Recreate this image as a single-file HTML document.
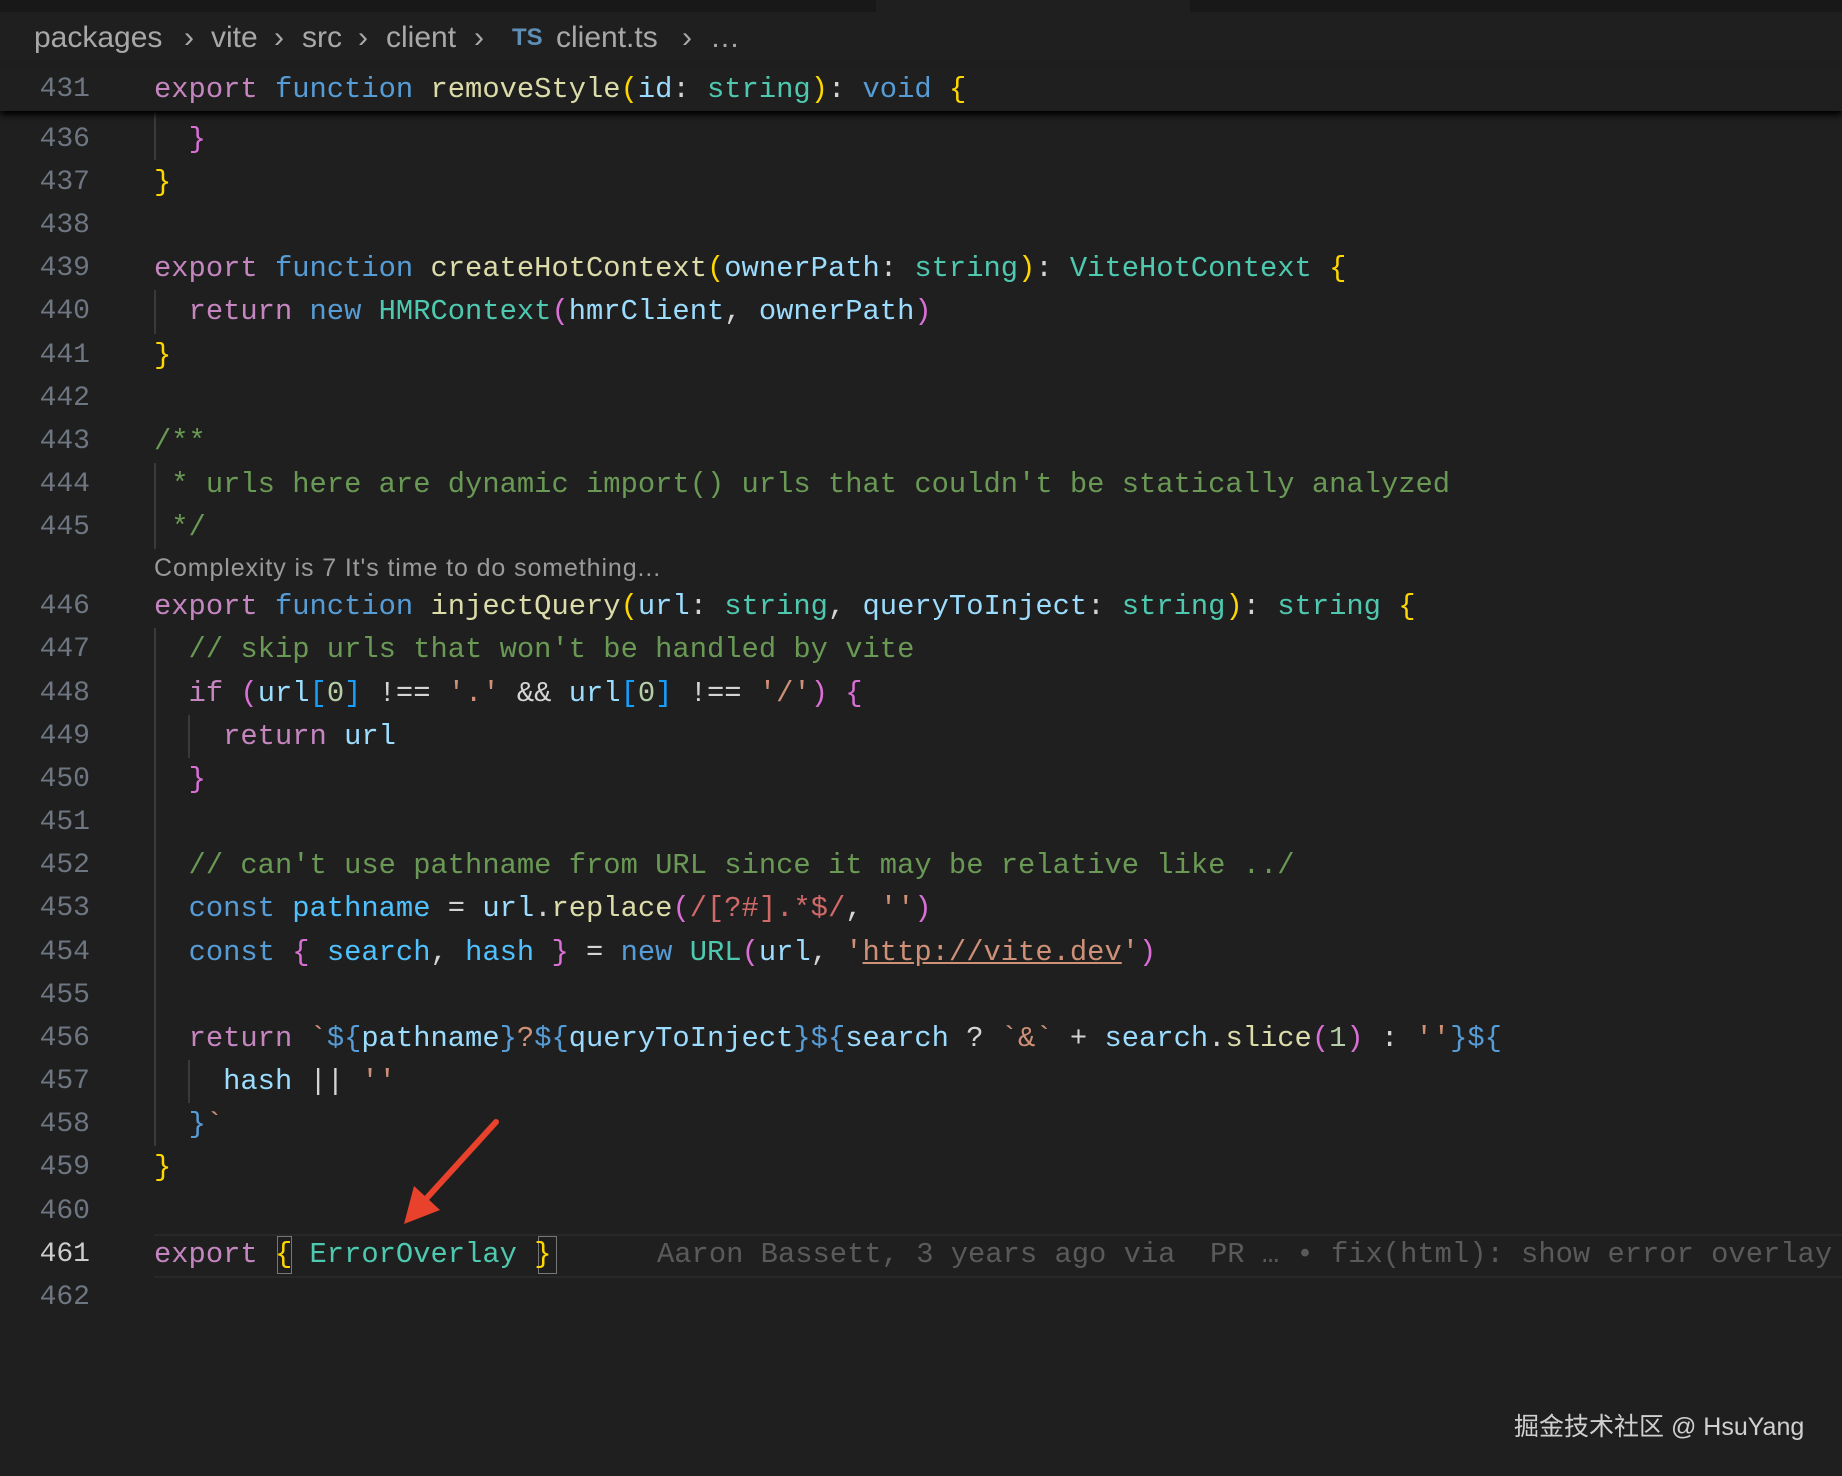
<!DOCTYPE html>
<html><head><meta charset="utf-8"><style>
html,body{margin:0;padding:0;}
body{width:1842px;height:1476px;background:#1f1f1f;position:relative;overflow:hidden;font-family:"Liberation Mono",monospace;}
.ln{position:absolute;left:0;width:90px;text-align:right;font-size:28px;line-height:43px;color:#6e7681;}
.cd{position:absolute;left:154px;font-size:28.8px;line-height:43px;white-space:pre;color:#d4d4d4;}
.g{position:absolute;width:2px;background:#3a3a3a;}
.bc{position:absolute;top:20px;font-family:'Liberation Sans',sans-serif;font-size:30px;color:#a8a8a8;white-space:pre;line-height:36px}
.k{color:#c586c0}.b{color:#569cd6}.f{color:#dcdcaa}.p{color:#9cdcfe}.t{color:#4ec9b0}.y{color:#ffd700}.m{color:#da70d6}.l{color:#179fff}.c{color:#6a9955}.s{color:#ce9178}.n{color:#b5cea8}.v{color:#4fc1ff}.r{color:#d16969}
</style></head><body>
<div style="position:absolute;left:0;top:0;width:876px;height:12px;background:#181818"></div>
<div style="position:absolute;left:1190px;top:0;width:652px;height:12px;background:#181818"></div>
<div class="bc" style="left:34px">packages</div>
<div class="bc" style="left:184px">›</div>
<div class="bc" style="left:211px">vite</div>
<div class="bc" style="left:274px">›</div>
<div class="bc" style="left:302px">src</div>
<div class="bc" style="left:358px">›</div>
<div class="bc" style="left:386px">client</div>
<div class="bc" style="left:474px">›</div>
<div class="bc" style="left:512px;color:#5f8fb5;font-weight:bold;font-size:24px">TS</div>
<div class="bc" style="left:556px">client.ts</div>
<div class="bc" style="left:682px">›</div>
<div class="bc" style="left:710px">…</div>

<div style="position:absolute;left:0;top:66px;width:1842px;height:45px;background:#1f1f1f;box-shadow:0 4px 6px #000;z-index:2">
<div class="ln" style="top:2px">431</div>
<div class="cd" style="top:2px"><span class="k">export</span> <span class="b">function</span> <span class="f">removeStyle</span><span class="y">(</span><span class="p">id</span>: <span class="t">string</span><span class="y">)</span>: <span class="b">void</span> <span class="y">{</span></div>
</div>

<div class="g" style="left:154px;top:112px;height:48px"></div>
<div class="g" style="left:154px;top:290px;height:44px"></div>
<div class="g" style="left:154px;top:463px;height:86px"></div>
<div class="g" style="left:154px;top:628px;height:518px"></div>
<div class="g" style="left:188px;top:715px;height:43px"></div>
<div class="g" style="left:188px;top:1060px;height:43px"></div>

<div class="ln" style="top:118px">436</div><div class="cd" style="top:118px">  <span class="m">}</span></div>
<div class="ln" style="top:161px">437</div><div class="cd" style="top:161px"><span class="y">}</span></div>
<div class="ln" style="top:204px">438</div>
<div class="ln" style="top:247px">439</div><div class="cd" style="top:247px"><span class="k">export</span> <span class="b">function</span> <span class="f">createHotContext</span><span class="y">(</span><span class="p">ownerPath</span>: <span class="t">string</span><span class="y">)</span>: <span class="t">ViteHotContext</span> <span class="y">{</span></div>
<div class="ln" style="top:290px">440</div><div class="cd" style="top:290px">  <span class="k">return</span> <span class="b">new</span> <span class="t">HMRContext</span><span class="m">(</span><span class="p">hmrClient</span>, <span class="p">ownerPath</span><span class="m">)</span></div>
<div class="ln" style="top:334px">441</div><div class="cd" style="top:334px"><span class="y">}</span></div>
<div class="ln" style="top:377px">442</div>
<div class="ln" style="top:420px">443</div><div class="cd c" style="top:420px">/**</div>
<div class="ln" style="top:463px">444</div><div class="cd c" style="top:463px"> * urls here are dynamic import() urls that couldn't be statically analyzed</div>
<div class="ln" style="top:506px">445</div><div class="cd c" style="top:506px"> */</div>
<div style="position:absolute;left:154px;top:554px;font-family:'Liberation Sans',sans-serif;font-size:25px;letter-spacing:0.9px;color:#9a9a9a">Complexity is 7 It's time to do something...</div>
<div class="ln" style="top:585px">446</div><div class="cd" style="top:585px"><span class="k">export</span> <span class="b">function</span> <span class="f">injectQuery</span><span class="y">(</span><span class="p">url</span>: <span class="t">string</span>, <span class="p">queryToInject</span>: <span class="t">string</span><span class="y">)</span>: <span class="t">string</span> <span class="y">{</span></div>
<div class="ln" style="top:628px">447</div><div class="cd c" style="top:628px">  // skip urls that won't be handled by vite</div>
<div class="ln" style="top:672px">448</div><div class="cd" style="top:672px">  <span class="k">if</span> <span class="m">(</span><span class="p">url</span><span class="l">[</span><span class="n">0</span><span class="l">]</span> !== <span class="s">'.'</span> &amp;&amp; <span class="p">url</span><span class="l">[</span><span class="n">0</span><span class="l">]</span> !== <span class="s">'/'</span><span class="m">)</span> <span class="m">{</span></div>
<div class="ln" style="top:715px">449</div><div class="cd" style="top:715px">    <span class="k">return</span> <span class="p">url</span></div>
<div class="ln" style="top:758px">450</div><div class="cd" style="top:758px">  <span class="m">}</span></div>
<div class="ln" style="top:801px">451</div>
<div class="ln" style="top:844px">452</div><div class="cd c" style="top:844px">  // can't use pathname from URL since it may be relative like ../</div>
<div class="ln" style="top:887px">453</div><div class="cd" style="top:887px">  <span class="b">const</span> <span class="v">pathname</span> = <span class="p">url</span>.<span class="f">replace</span><span class="m">(</span><span class="r">/[?#].*$/</span>, <span class="s">''</span><span class="m">)</span></div>
<div class="ln" style="top:931px">454</div><div class="cd" style="top:931px">  <span class="b">const</span> <span class="m">{</span> <span class="v">search</span>, <span class="v">hash</span> <span class="m">}</span> = <span class="b">new</span> <span class="t">URL</span><span class="m">(</span><span class="p">url</span>, <span class="s">'<u>http://vite.dev</u>'</span><span class="m">)</span></div>
<div class="ln" style="top:974px">455</div>
<div class="ln" style="top:1017px">456</div><div class="cd" style="top:1017px">  <span class="k">return</span> <span class="s">`</span><span class="b">${</span><span class="p">pathname</span><span class="b">}</span><span class="s">?</span><span class="b">${</span><span class="p">queryToInject</span><span class="b">}${</span><span class="p">search</span> ? <span class="s">`&amp;`</span> + <span class="p">search</span>.<span class="f">slice</span><span class="m">(</span><span class="n">1</span><span class="m">)</span> : <span class="s">''</span><span class="b">}${</span></div>
<div class="ln" style="top:1060px">457</div><div class="cd" style="top:1060px">    <span class="p">hash</span> || <span class="s">''</span></div>
<div class="ln" style="top:1103px">458</div><div class="cd" style="top:1103px">  <span class="b">}</span><span class="s">`</span></div>
<div class="ln" style="top:1146px">459</div><div class="cd" style="top:1146px"><span class="y">}</span></div>
<div class="ln" style="top:1190px">460</div>
<div style="position:absolute;left:154px;top:1234px;width:1688px;height:40px;border-top:2px solid #282828;border-bottom:2px solid #282828"></div>
<div style="position:absolute;left:277px;top:1236px;width:15px;height:38px;border:1.5px solid #777;box-sizing:border-box"></div>
<div style="position:absolute;left:538px;top:1236px;width:19px;height:38px;border:1.5px solid #777;box-sizing:border-box"></div>
<div class="ln" style="top:1233px;color:#cccccc">461</div><div class="cd" style="top:1233px"><span class="k">export</span> <span class="y">{</span> <span class="t">ErrorOverlay</span> <span class="y">}</span></div>
<div class="cd" style="top:1233px;left:657px;color:#5a5a5a">Aaron Bassett, 3 years ago via  PR … • fix(html): show error overlay</div>
<div class="ln" style="top:1276px">462</div>

<svg style="position:absolute;left:0;top:0" width="1842" height="1476"><line x1="496" y1="1122" x2="425" y2="1200" stroke="#e8412c" stroke-width="6" stroke-linecap="round"/><polygon points="404,1224 414,1186 440,1210" fill="#e8412c"/></svg>

<div style="position:absolute;left:1514px;top:1407px;font-family:'Liberation Sans','Noto Sans CJK SC',sans-serif;font-size:25px;color:#d0d0d0;white-space:pre">掘金技术社区 @ HsuYang</div>
</body></html>
